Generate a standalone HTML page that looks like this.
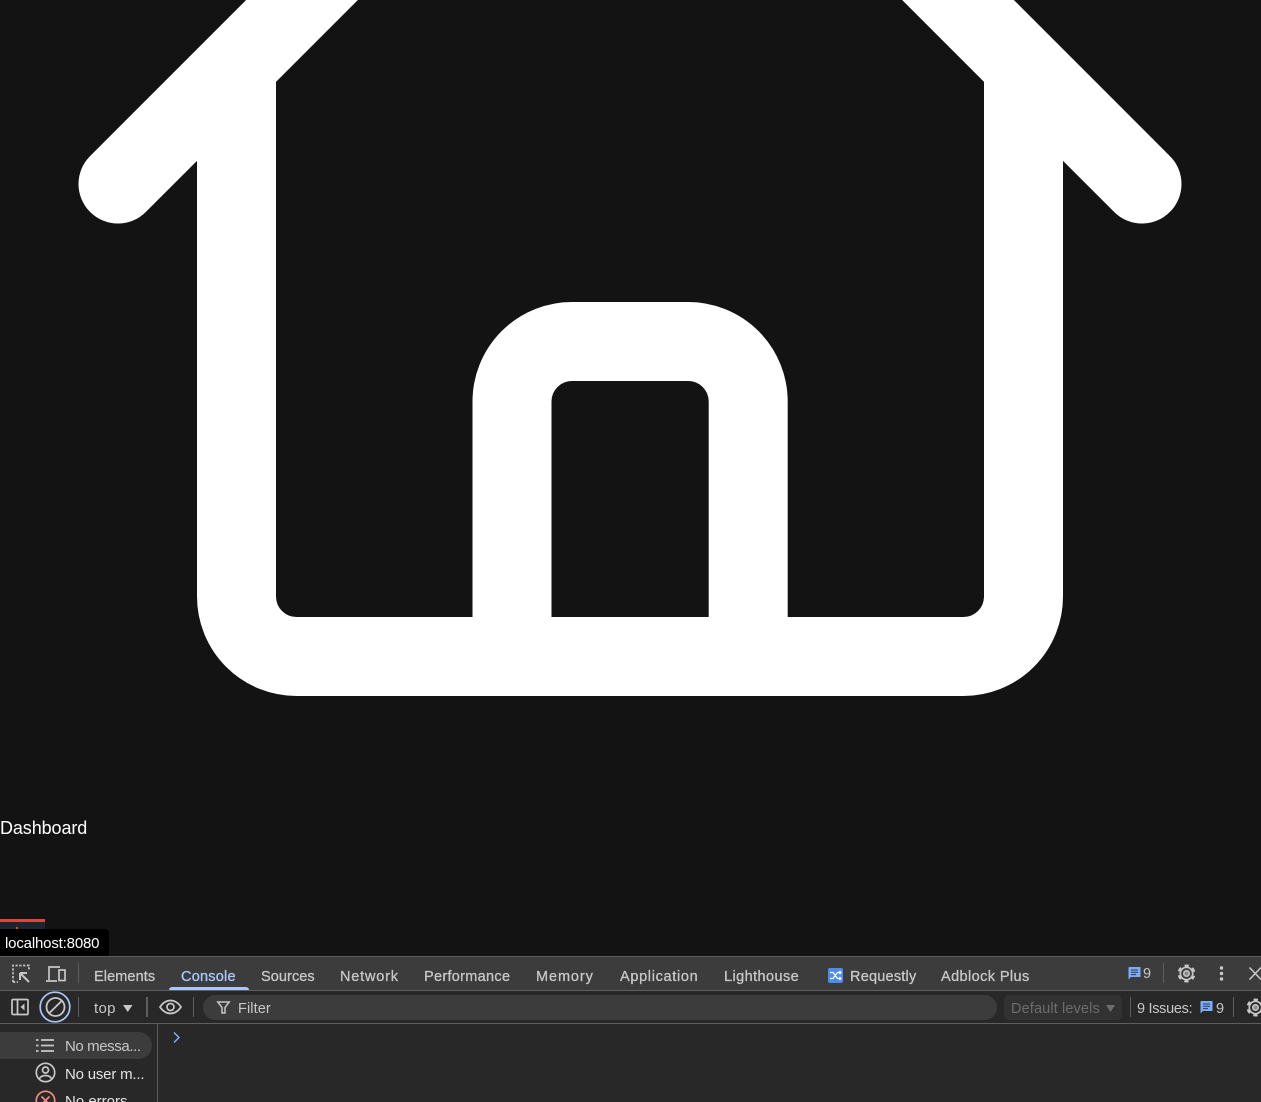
<!DOCTYPE html>
<html>
<head>
<meta charset="utf-8">
<style>
html,body{margin:0;padding:0;width:1261px;height:1102px;overflow:hidden;background:#131313;font-family:"Liberation Sans",sans-serif;}
#w{position:relative;width:1261px;height:1102px;overflow:hidden;background:#131313;}
.t{position:absolute;white-space:nowrap;line-height:18px;height:18px;}
.b{position:absolute;}
.tab{top:968px;font-size:14.5px;color:#c7c7c7;font-weight:400;letter-spacing:.22px;-webkit-text-stroke:.3px #c7c7c7;}
svg{position:absolute;overflow:visible;}
</style>
</head>
<body>
<div id="w">
<svg width="1261" height="956" style="left:0;top:0" viewBox="0 0 1261 956">
<g fill="none" stroke="#fff" stroke-width="79" stroke-linecap="round" stroke-linejoin="round">
<path d="M118 184L630 -328L1142 184"/>
<path d="M236.500 82V596.500a60 60 0 0 0 60 60H963.500a60 60 0 0 0 60-60V82"/>
<path d="M512 656V401.500a60 60 0 0 1 60-60H688.200a60 60 0 0 1 60 60V656"/>
</g>
</svg>

<div class="t" style="left:0;top:819px;font-size:18px;color:#fff;letter-spacing:-.1px;">Dashboard</div>

<div class="b" style="left:0;top:919px;width:45px;height:3px;background:#d9483b;"></div>
<div class="b" style="left:0;top:922px;width:45px;height:8px;background:#1d2530;"></div>
<div class="b" style="left:16px;top:927px;width:2px;height:3px;background:#d9483b;"></div>
<div class="b" style="left:0;top:929px;width:109px;height:28px;background:#000;border-radius:0 4px 0 0;"></div>
<div class="t" style="left:5px;top:935px;font-size:15px;color:#fff;letter-spacing:-.17px;">localhost:8080</div>

<!-- devtools -->
<div class="b" style="left:0;top:956px;width:1261px;height:1px;background:#5e5e5e;"></div>
<div class="b" style="left:0;top:957px;width:1261px;height:33px;background:#3c3c3c;"></div>
<div class="b" style="left:0;top:990px;width:1261px;height:1px;background:#5e5e5e;"></div>
<div class="b" style="left:0;top:991px;width:1261px;height:32px;background:#282828;"></div>
<div class="b" style="left:0;top:1023px;width:1261px;height:1px;background:#5e5e5e;"></div>
<div class="b" style="left:0;top:1024px;width:1261px;height:78px;background:#282828;"></div>
<div class="b" style="left:157px;top:1024px;width:1px;height:78px;background:#5e5e5e;"></div>

<!-- top toolbar icons -->
<svg style="left:11px;top:964px" width="20" height="20" viewBox="0 0 20 20" fill="none" stroke="#c7c7c7" stroke-width="1.700">
<path d="M2 18V1.500H18V7" stroke-dasharray="2.200 1.600"/><path d="M2 18H7" stroke-dasharray="2.200 1.600"/>
<path d="M9 9H16M9 9V16M9 9L18 18" stroke-width="2"/>
</svg>
<svg style="left:45px;top:965px" width="22" height="18" viewBox="0 0 22 18" fill="none" stroke="#c7c7c7" stroke-width="1.700">
<path d="M4 15V2H15M1 16H12"/><rect x="14" y="5" width="6" height="10.500"/>
</svg>
<div class="b" style="left:78px;top:963px;width:1px;height:20px;background:#5e5e5e;"></div>

<div class="t tab" style="left:94px;letter-spacing:.1px;">Elements</div>
<div class="t tab" style="left:181px;color:#a8c7fa;-webkit-text-stroke:.3px #a8c7fa;">Console</div>
<div class="b" style="left:169px;top:987px;width:80px;height:3px;background:#a8c7fa;border-radius:3px 3px 0 0;"></div>
<div class="t tab" style="left:261px;letter-spacing:.08px;">Sources</div>
<div class="t tab" style="left:340px;letter-spacing:.8px;">Network</div>
<div class="t tab" style="left:424px;letter-spacing:.3px;">Performance</div>
<div class="t tab" style="left:536px;letter-spacing:.9px;">Memory</div>
<div class="t tab" style="left:620px;letter-spacing:.67px;">Application</div>
<div class="t tab" style="left:724px;letter-spacing:.42px;">Lighthouse</div>
<svg style="left:828px;top:968px" width="15" height="15" viewBox="0 0 15 15">
<rect width="15" height="15" rx="2" fill="#4d8df0"/>
<path d="M2 4.500H5L9.500 10.500H13M2 10.500H5L9.500 4.500H13M11.500 3L13 4.500L11.500 6M11.500 9L13 10.500L11.500 12" fill="none" stroke="#fff" stroke-width="1.300"/>
</svg>
<div class="t tab" style="left:850px;">Requestly</div>
<div class="t tab" style="left:941px;letter-spacing:.4px;">Adblock Plus</div>

<svg style="left:1128px;top:967px" width="13" height="13" viewBox="0 0 13 13">
<path d="M1 0H12.500V10H3L0.500 12.500V0.500Z" fill="#7cacf8"/><path d="M3 3H10M3 5.300H10M3 7.600H8" stroke="#2a3a55" stroke-width="1"/>
</svg>
<div class="t" style="left:1143px;top:965px;font-size:14.500px;color:#c7c7c7;">9</div>
<div class="b" style="left:1163px;top:963px;width:1px;height:20px;background:#5e5e5e;"></div>
<svg style="left:1177px;top:964px" width="19" height="19" viewBox="0 0 19 19" fill="none" stroke="#c7c7c7">
<circle cx="9.500" cy="9.500" r="6.200" stroke-width="1.700"/><circle cx="9.500" cy="9.500" r="7.500" stroke-width="3" stroke-dasharray="4 3.854" stroke-dashoffset="2" transform="rotate(30 9.500 9.500)"/><circle cx="9.500" cy="9.500" r="2.800" fill="#8a8a8a" stroke-width="1.500"/>
</svg>
<svg style="left:1219px;top:966px" width="5" height="15" viewBox="0 0 5 15" fill="#c7c7c7">
<circle cx="2.500" cy="2" r="1.700"/><circle cx="2.500" cy="7.500" r="1.700"/><circle cx="2.500" cy="13" r="1.700"/>
</svg>
<svg style="left:1249px;top:967px" width="12" height="13" viewBox="0 0 12 13" fill="none" stroke="#c7c7c7" stroke-width="1.600">
<path d="M0.500 0.500L12 12.500M12 0.500L0.500 12.500"/>
</svg>

<!-- second toolbar -->
<svg style="left:11px;top:998px" width="18" height="18" viewBox="0 0 18 18" fill="none" stroke="#c7c7c7" stroke-width="1.700">
<rect x="1" y="1.500" width="16" height="15" rx="1"/><path d="M6.500 1.500V16.500"/><path d="M13.500 5.500V12.500L9.500 9Z" fill="#c7c7c7" stroke="none"/>
</svg>
<svg style="left:39px;top:991px" width="32" height="32" viewBox="0 0 32 32" fill="none">
<circle cx="16" cy="16" r="14.800" stroke="#a8c7fa" stroke-width="1.700"/>
<circle cx="16.500" cy="16" r="9" stroke="#c7c7c7" stroke-width="1.800"/><path d="M10.200 22.300L22.800 9.700" stroke="#c7c7c7" stroke-width="1.800"/>
</svg>
<div class="b" style="left:78px;top:997px;width:1px;height:20px;background:#5e5e5e;"></div>
<div class="t" style="left:94px;top:1000px;font-size:15px;color:#c7c7c7;letter-spacing:.3px;">top</div>
<svg style="left:123px;top:1005px" width="10" height="7" viewBox="0 0 10 7"><path d="M0 0H9.500L4.750 7Z" fill="#c7c7c7"/></svg>
<div class="b" style="left:146px;top:997px;width:2px;height:20px;background:#5e5e5e;"></div>
<svg style="left:159px;top:999px" width="23" height="16" viewBox="0 0 23 16" fill="none" stroke="#c7c7c7" stroke-width="1.700">
<path d="M1 8C4 3.500 7.500 1.500 11.500 1.500S19 3.500 22 8C19 12.500 15.500 14.500 11.500 14.500S4 12.500 1 8Z"/><circle cx="11.500" cy="8" r="3.500"/>
</svg>
<div class="b" style="left:193px;top:997px;width:1px;height:20px;background:#5e5e5e;"></div>
<div class="b" style="left:203px;top:995px;width:794px;height:25px;background:#3c3c3c;border-radius:13px;"></div>
<svg style="left:217px;top:1001px" width="13" height="13" viewBox="0 0 13 13" fill="none" stroke="#c7c7c7" stroke-width="1.500">
<path d="M0.800 1H12.200L8 6.500V12H5V6.500Z"/>
</svg>
<div class="t" style="left:238px;top:1000px;font-size:14.500px;color:#c7c7c7;letter-spacing:.1px;">Filter</div>
<div class="b" style="left:1004px;top:995px;width:118px;height:25px;background:#323232;border-radius:5px;"></div>
<div class="t" style="left:1011px;top:1000px;font-size:14.500px;color:#6d6d6d;letter-spacing:.13px;">Default levels</div>
<svg style="left:1106px;top:1005px" width="9" height="7" viewBox="0 0 9 7"><path d="M0 0H9L4.500 7Z" fill="#6d6d6d"/></svg>
<div class="b" style="left:1130px;top:997px;width:1px;height:20px;background:#5e5e5e;"></div>
<div class="t" style="left:1137px;top:1000px;font-size:14.500px;color:#c7c7c7;letter-spacing:-.3px;">9 Issues:</div>
<svg style="left:1200px;top:1001px" width="13" height="13" viewBox="0 0 13 13">
<path d="M1 0H12.500V10H3L0.500 12.500V0.500Z" fill="#7cacf8"/><path d="M3 3H10M3 5.300H10M3 7.600H8" stroke="#2a3a55" stroke-width="1"/>
</svg>
<div class="t" style="left:1216px;top:1000px;font-size:14.500px;color:#c7c7c7;">9</div>
<div class="b" style="left:1233px;top:997px;width:1px;height:20px;background:#5e5e5e;"></div>
<svg style="left:1246px;top:998px" width="19" height="19" viewBox="0 0 19 19" fill="none" stroke="#c7c7c7">
<circle cx="9.500" cy="9.500" r="6.200" stroke-width="1.700"/><circle cx="9.500" cy="9.500" r="7.500" stroke-width="3" stroke-dasharray="4 3.854" stroke-dashoffset="2" transform="rotate(30 9.500 9.500)"/><circle cx="9.500" cy="9.500" r="2.800" fill="#8a8a8a" stroke-width="1.500"/>
</svg>

<!-- sidebar -->
<div class="b" style="left:0;top:1032px;width:152px;height:27px;background:#3c3c3c;border-radius:0 14px 14px 0;"></div>
<svg style="left:36px;top:1038px" width="18" height="15" viewBox="0 0 18 15" fill="none" stroke="#c7c7c7" stroke-width="1.700">
<path d="M5 2H18M5 7.500H18M5 13H18"/><path d="M0 2H2.500M0 7.500H2.500M0 13H2.500"/>
</svg>
<div class="t" style="left:65px;top:1038px;font-size:15px;color:#c7c7c7;letter-spacing:-.4px;">No messa...</div>
<svg style="left:35px;top:1062px" width="21" height="21" viewBox="0 0 21 21" fill="none" stroke="#c7c7c7" stroke-width="1.700">
<circle cx="10.500" cy="10.500" r="9.200"/><circle cx="10.500" cy="8" r="3"/><path d="M4.500 16.500C6 14 8 13.500 10.500 13.500S15 14 16.500 16.500"/>
</svg>
<div class="t" style="left:65px;top:1066px;font-size:15px;color:#e3e3e3;letter-spacing:-.2px;">No user m...</div>
<svg style="left:35px;top:1090px" width="21" height="21" viewBox="0 0 21 21" fill="none" stroke="#f28b82" stroke-width="1.700">
<circle cx="10.500" cy="10.500" r="9.200"/><path d="M6.500 6.500L14.500 14.500M14.500 6.500L6.500 14.500"/>
</svg>
<div class="t" style="left:65px;top:1093px;font-size:15px;color:#e3e3e3;">No errors</div>
<svg style="left:173px;top:1032px" width="7" height="11" viewBox="0 0 7 11" fill="none" stroke="#7cacf8" stroke-width="1.500">
<path d="M1 0.500L6 5.500L1 10.500"/>
</svg>
</div>
</body>
</html>
